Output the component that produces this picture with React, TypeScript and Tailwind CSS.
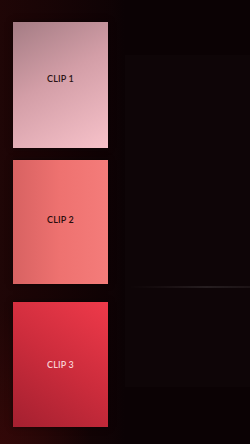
export default function App() {
  const clips = [
    {
      label: "CLIP 1",
      bg: "bg-[linear-gradient(150deg,#a47c84_0%,#d39ea7_45%,#f7c2ca_100%)]",
      text: "text-[#2a1214]",
      mt: "mt-[22px]",
      h: "h-[126px]",
      pb: "pb-[12px]",
    },
    {
      label: "CLIP 2",
      bg: "bg-[linear-gradient(90deg,#d86262_0%,#ee7270_50%,#f47c7a_100%)]",
      text: "text-[#2a0c0c]",
      mt: "mt-[12px]",
      h: "h-[124px]",
      pb: "pb-[4px]",
    },
    {
      label: "CLIP 3",
      bg: "bg-[linear-gradient(35deg,#a42030_0%,#cc2c3c_50%,#ee3a4a_100%)]",
      text: "text-[#f8d0d4]",
      mt: "mt-[18px]",
      h: "h-[125px]",
      pb: "pb-0",
    },
  ];

  return (
    <div
      className="relative w-[250px] h-[444px] overflow-hidden bg-[#0b0204] flex"
      style={{ fontFamily: "Lato, 'Noto Sans', sans-serif" }}
    >
      <div className="pointer-events-none absolute inset-0 bg-[radial-gradient(ellipse_90px_140px_at_0%_100%,rgba(120,14,10,0.5),transparent)]" />
      <div className="pointer-events-none absolute inset-0 bg-[linear-gradient(90deg,rgba(42,8,8,0.65)_0%,rgba(22,4,6,0.35)_45%,transparent_50%)]" />

      <div className="relative w-[121px] shrink-0 pl-[13px] pr-[13px] flex flex-col">
        {clips.map((c) => (
          <div
            key={c.label}
            className={`${c.mt} ${c.h} ${c.pb} w-[95px] ${c.bg} flex items-center justify-center shadow-[0_0_6px_rgba(0,0,0,0.5)]`}
          >
            <span className={`text-[9px] font-semibold tracking-[0.02em] ${c.text}`}>
              {c.label}
            </span>
          </div>
        ))}
      </div>

      <div className="relative flex-1 pl-[4px]">
        <div className="mt-[55px] h-[332px] bg-[rgba(255,255,255,0.015)] flex flex-col">
          <div className="mt-[231px] h-[2px] bg-[linear-gradient(90deg,transparent_0%,rgba(255,255,255,0.04)_30%,rgba(255,255,255,0.1)_65%,rgba(255,255,255,0.06)_100%)] blur-[0.6px]" />
        </div>
      </div>
    </div>
  );
}
